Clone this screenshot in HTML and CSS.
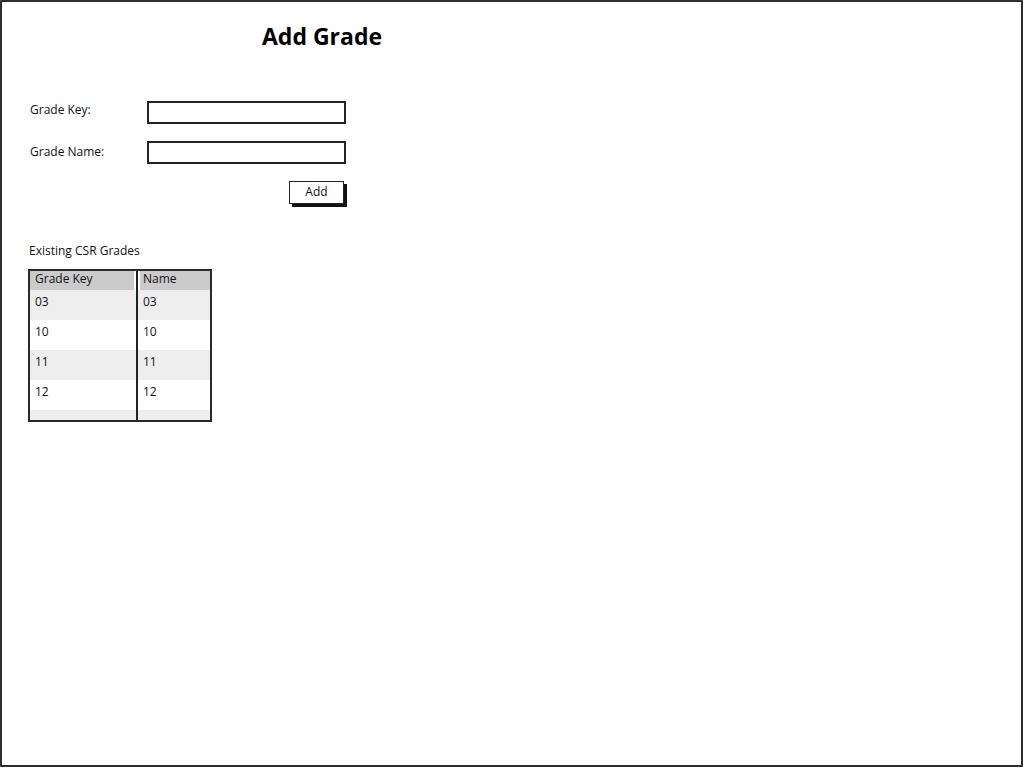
FILE: index.html
```html
<!DOCTYPE html>
<html>
<head>
<meta charset="utf-8">
<link rel="stylesheet" href="styles.css">
</head>
<body>
<div class="frame">
  <h1 class="title">Add Grade</h1>
  <div class="form">
    <div class="row">
      <label class="label">Grade Key:</label>
      <div class="input"></div>
    </div>
    <div class="row">
      <label class="label">Grade Name:</label>
      <div class="input"></div>
    </div>
    <div class="actions">
      <div class="button">Add</div>
    </div>
  </div>
  <div class="section-label">Existing CSR Grades</div>
  <div class="table">
    <div class="col col-key">
      <div class="th">Grade Key</div>
      <div class="td odd">03</div>
      <div class="td">10</div>
      <div class="td odd">11</div>
      <div class="td">12</div>
      <div class="td odd tail"></div>
    </div>
    <div class="col col-name">
      <div class="th">Name</div>
      <div class="td odd">03</div>
      <div class="td">10</div>
      <div class="td odd">11</div>
      <div class="td">12</div>
      <div class="td odd tail"></div>
    </div>
  </div>
</div>
</body>
</html>
```

FILE: styles.css
```css
html, body {
  margin: 0;
  padding: 0;
  background: #fff;
}
body {
  font-family: "Open Sans", "Liberation Sans", sans-serif;
  color: #111;
}
.frame {
  box-sizing: border-box;
  width: 1023px;
  height: 767px;
  border: 2px solid #2e2e2e;
  border-radius: 1px;
  padding: 0 0 0 28px;
}
.title {
  margin: 0;
  padding: 19px 0 0 232px;
  font-size: 23px;
  font-weight: 700;
  line-height: 30px;
  letter-spacing: 0;
  color: #000;
}
.form {
  margin-top: 50px;
  width: 317px;
}
.row {
  display: flex;
  align-items: center;
  height: 23px;
  margin-bottom: 17px;
}
.label {
  width: 117px;
  font-size: 12px;
  line-height: 16px;
  margin-top: -5px;
}
.row + .row .label {
  margin-top: -1px;
}
.input {
  box-sizing: border-box;
  width: 199px;
  height: 23px;
  border: 2px solid #222;
  background: #fff;
}
.actions {
  display: flex;
  justify-content: flex-end;
  margin-top: 0;
  padding-right: 3px;
}
.button {
  box-sizing: border-box;
  width: 55px;
  height: 23px;
  border: 1.5px solid #222;
  box-shadow: 3px 3px 0 #111;
  font-size: 12px;
  line-height: 19px;
  text-align: center;
  background: #fff;
}
.section-label {
  margin-top: 39px;
  margin-left: -1px;
  font-size: 12px;
  line-height: 16px;
}
.table {
  display: flex;
  width: 184px;
  margin-top: 10px;
  margin-left: -2px;
  box-sizing: border-box;
  border: 2px solid #2a2a2a;
}
.col-key {
  width: 106px;
  border-right: 2px solid #222;
}
.col-name {
  flex: 1;
}
.th {
  height: 19px;
  background: #cbcbcb;
  font-size: 12px;
  line-height: 16px;
  padding-left: 5px;
}
.col-key .th {
  margin-right: 2px;
}
.col-name .th {
  margin-left: 2px;
  padding-left: 3px;
}
.td {
  height: 30px;
  box-sizing: border-box;
  padding: 4px 0 0 5px;
  font-size: 12px;
  line-height: 16px;
  background: #fff;
}
.td.odd {
  background: #eeeeee;
}
.td.tail {
  height: 10px;
}
```
